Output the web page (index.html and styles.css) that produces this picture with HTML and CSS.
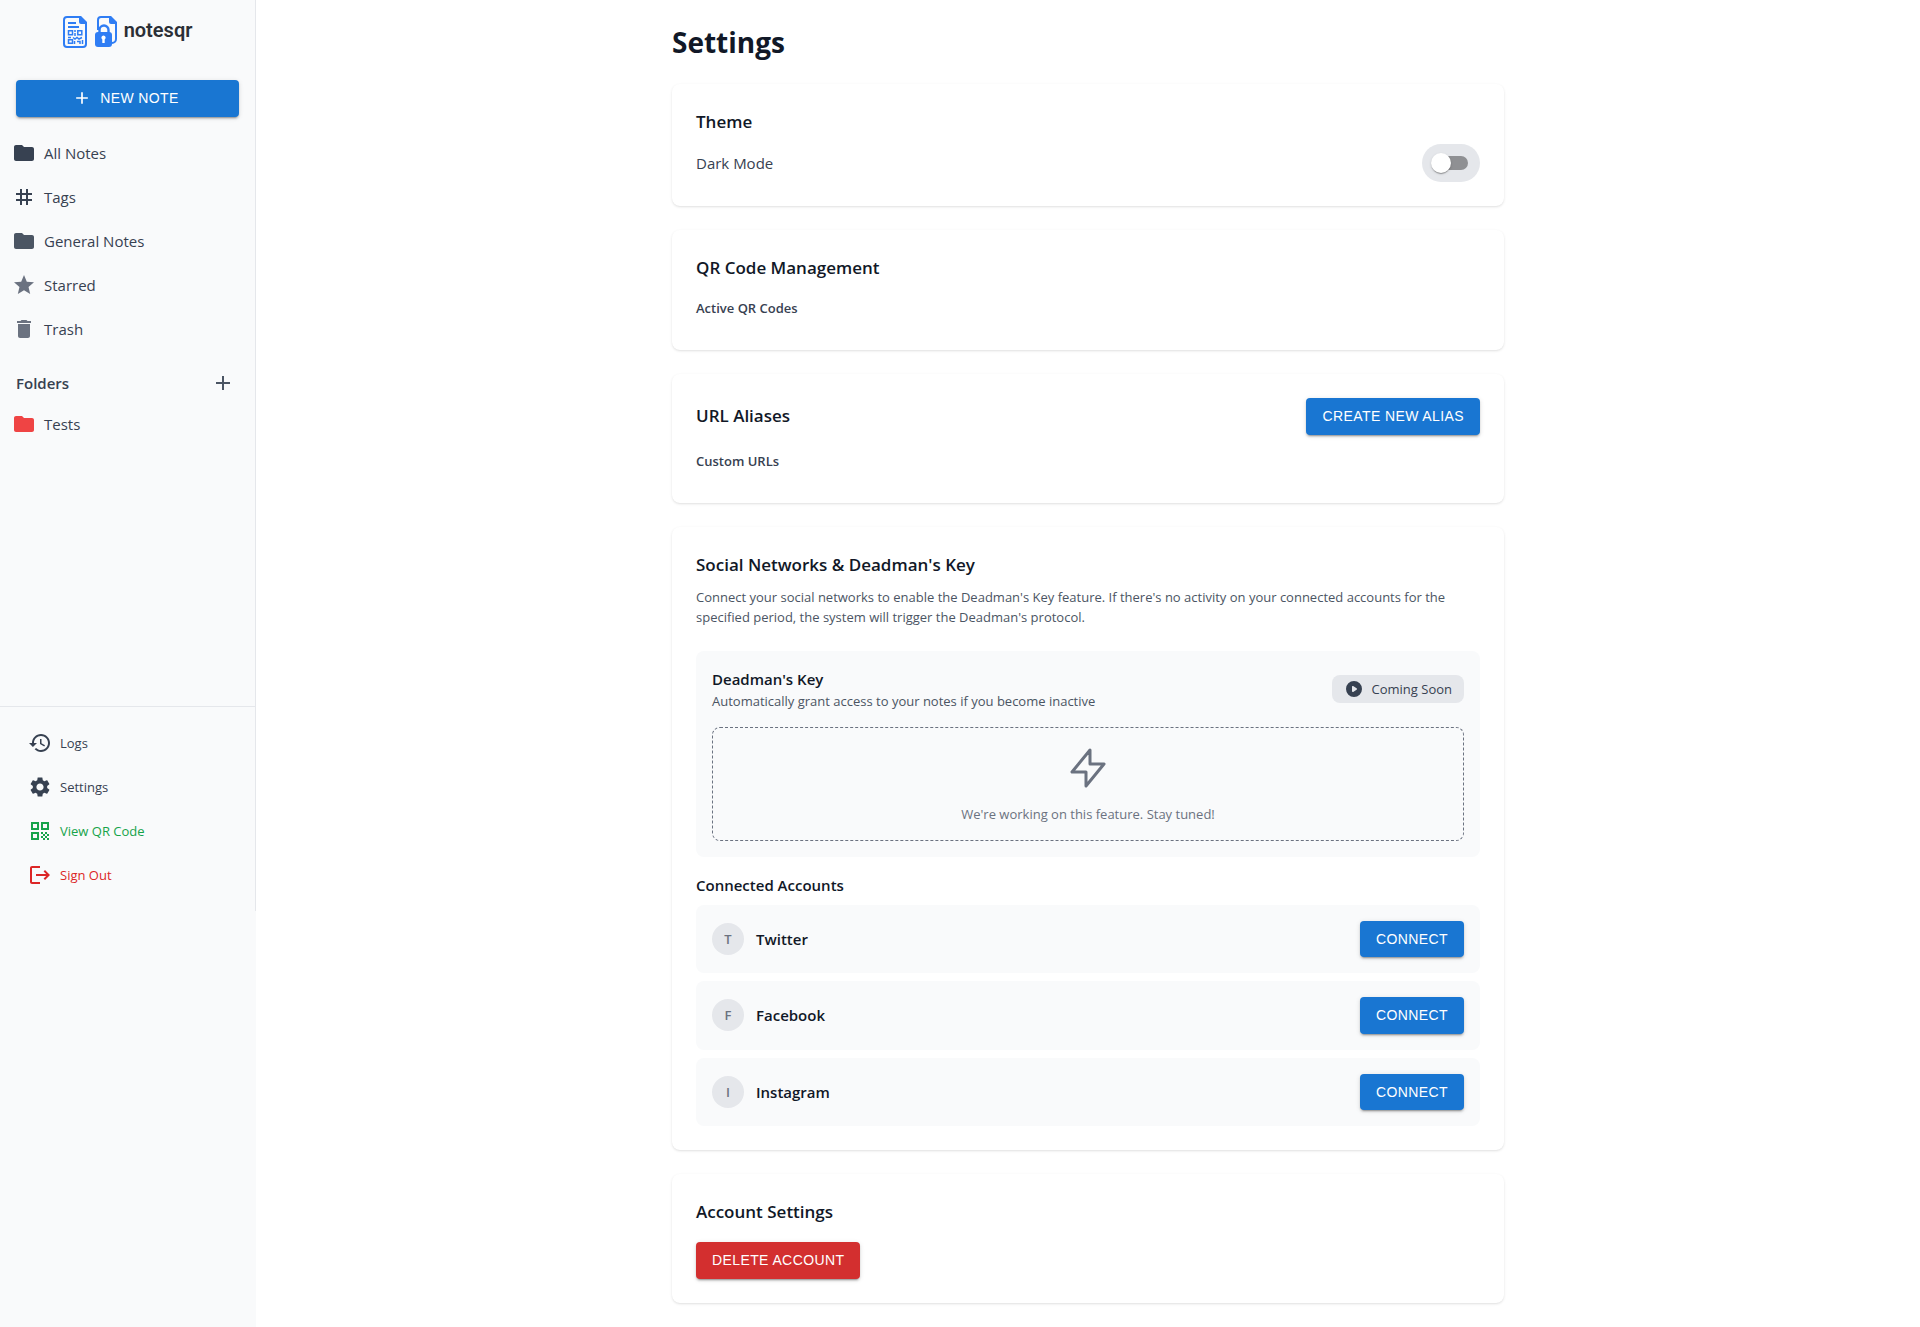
FILE: index.html
```html
<!DOCTYPE html>
<html lang="en">
<head>
<meta charset="utf-8">
<meta name="viewport" content="width=device-width, initial-scale=1">
<title>Settings - notesqr</title>
<link rel="stylesheet" href="styles.css">
</head>
<body>
<div class="app">
  <aside class="sidebar">
    <div class="sidebar-panel">
      <a class="logo" href="#">
        <svg class="logo-mark" viewBox="0 0 54 32" aria-hidden="true">
          <g fill="none" stroke="#2f7df4" stroke-width="2">
            <path d="M4 1h13l6 6v21a3 3 0 0 1-3 3H4a3 3 0 0 1-3-3V4a3 3 0 0 1 3-3z"/>
            <path d="M5 7h8M5 11h11"/>
            <path stroke-width="1.500" d="M5.500 14.800h4v4h-4zM14.800 14.800h4v4h-4zM5.500 23.800h4v3.500h-4z"/>
            <path stroke-width="1.500" d="M11 15h2M12 17v3M5 21.500h3M10 21.500l2 1.500 2-1.500 2 1.500 3-1.500M11.500 25v3M14 25.500h3v2.500M19.500 24v4"/>
            <path d="M35 14V4a3 3 0 0 1 3-3h9l6 6v16a4 4 0 0 1-4 4"/>
            <path stroke-width="2.400" d="M36.500 17v-3a4.500 4.500 0 0 1 9 0v3"/>
          </g>
          <path fill="#2f7df4" d="M16 0h2l6 6v2h-6a2 2 0 0 1-2-2zM46 0h2l6 6v2h-6a2 2 0 0 1-2-2z"/>
          <rect x="32" y="16" width="17" height="15" rx="3" fill="#2f7df4"/>
          <path fill="#fff" d="M40.500 19.500a2.200 2.200 0 0 1 1.200 4v3.500h-2.400v-3.500a2.200 2.200 0 0 1 1.200-4z"/>
        </svg>
        <span class="logo-text">notesqr</span>
      </a>

      <button class="btn btn-block" type="button">
        <svg class="btn-icon" viewBox="0 0 24 24" aria-hidden="true"><path d="M19 13h-6v6h-2v-6H5v-2h6V5h2v6h6v2z"/></svg>
        NEW NOTE
      </button>

      <nav class="nav" aria-label="Notes">
        <a class="nav-item" href="#"><svg class="icon" viewBox="0 0 24 24" aria-hidden="true"><path d="M10 4H4c-1.100 0-1.990.9-1.990 2L2 18c0 1.100.9 2 2 2h16c1.100 0 2-.9 2-2V8c0-1.100-.9-2-2-2h-8l-2-2z"/></svg>All Notes</a>
        <a class="nav-item" href="#"><svg class="icon" viewBox="0 0 24 24" aria-hidden="true"><path d="M20 10V8h-4V4h-2v4h-4V4H8v4H4v2h4v4H4v2h4v4h2v-4h4v4h2v-4h4v-2h-4v-4h4zm-6 4h-4v-4h4v4z"/></svg>Tags</a>
        <a class="nav-item" href="#"><svg class="icon icon-slate" viewBox="0 0 24 24" aria-hidden="true"><path d="M10 4H4c-1.100 0-1.990.9-1.990 2L2 18c0 1.100.9 2 2 2h16c1.100 0 2-.9 2-2V8c0-1.100-.9-2-2-2h-8l-2-2z"/></svg>General Notes</a>
        <a class="nav-item" href="#"><svg class="icon icon-gray" viewBox="0 0 24 24" aria-hidden="true"><path d="M12 17.270 18.180 21l-1.640-7.030L22 9.240l-7.190-.61L12 2 9.190 8.630 2 9.240l5.460 4.730L5.820 21z"/></svg>Starred</a>
        <a class="nav-item" href="#"><svg class="icon icon-gray" viewBox="0 0 24 24" aria-hidden="true"><path d="M6 19c0 1.100.9 2 2 2h8c1.100 0 2-.9 2-2V7H6v12zM19 4h-3.500l-1-1h-5l-1 1H5v2h14V4z"/></svg>Trash</a>
      </nav>

      <div class="folders-head">
        <h2 class="folders-title">Folders</h2>
        <button class="icon-btn" type="button" aria-label="Add folder"><svg class="icon icon-slate" viewBox="0 0 24 24" aria-hidden="true"><path d="M19 13h-6v6h-2v-6H5v-2h6V5h2v6h6v2z"/></svg></button>
      </div>
      <nav class="nav nav-folders" aria-label="Folders">
        <a class="nav-item" href="#"><svg class="icon icon-red" viewBox="0 0 24 24" aria-hidden="true"><path d="M10 4H4c-1.100 0-1.990.9-1.990 2L2 18c0 1.100.9 2 2 2h16c1.100 0 2-.9 2-2V8c0-1.100-.9-2-2-2h-8l-2-2z"/></svg>Tests</a>
      </nav>

      <nav class="nav nav-footer" aria-label="Account">
        <a class="nav-item nav-small" href="#"><svg class="icon" viewBox="0 0 24 24" aria-hidden="true"><path d="M13 3c-4.970 0-9 4.030-9 9H1l3.890 3.890.07.14L9 12H6c0-3.870 3.130-7 7-7s7 3.130 7 7-3.130 7-7 7c-1.930 0-3.680-.79-4.940-2.060l-1.420 1.420C8.270 19.990 10.510 21 13 21c4.970 0 9-4.030 9-9s-4.030-9-9-9zm-1 5v5l4.280 2.540.72-1.210-3.500-2.080V8H12z"/></svg>Logs</a>
        <a class="nav-item nav-small" href="#" aria-current="page"><svg class="icon" viewBox="0 0 24 24" aria-hidden="true"><path d="M19.140 12.940c.04-.3.060-.61.060-.94 0-.32-.02-.64-.07-.94l2.030-1.580c.18-.14.230-.41.120-.61l-1.920-3.320c-.12-.22-.37-.29-.59-.22l-2.390.96c-.5-.38-1.030-.7-1.620-.94l-.36-2.540c-.04-.24-.24-.41-.48-.41h-3.840c-.24 0-.43.170-.47.410l-.36 2.540c-.59.240-1.130.57-1.620.94l-2.390-.96c-.22-.08-.47 0-.59.220L2.740 8.870c-.12.210-.08.470.12.610l2.030 1.580c-.05.3-.09.630-.09.940s.02.640.07.940l-2.030 1.580c-.18.140-.23.410-.12.610l1.920 3.320c.12.220.37.290.59.220l2.390-.96c.5.380 1.030.7 1.620.94l.36 2.540c.05.240.24.410.48.410h3.840c.24 0 .44-.17.470-.41l.36-2.540c.59-.24 1.130-.56 1.620-.94l2.390.96c.22.080.47 0 .59-.22l1.920-3.320c.12-.22.070-.47-.12-.61l-2.010-1.580zM12 15.600c-1.980 0-3.600-1.620-3.600-3.600s1.620-3.600 3.600-3.600 3.600 1.620 3.600 3.600-1.620 3.600-3.600 3.600z"/></svg>Settings</a>
        <a class="nav-item nav-small nav-green" href="#"><svg class="icon" viewBox="0 0 24 24" aria-hidden="true"><path d="M3 11h8V3H3v8zm2-6h4v4H5V5zM3 21h8v-8H3v8zm2-6h4v4H5v-4zM13 3v8h8V3h-8zm6 6h-4V5h4v4zM19 19h2v2h-2zM13 13h2v2h-2zM15 15h2v2h-2zM13 17h2v2h-2zM15 19h2v2h-2zM17 17h2v2h-2zM17 13h2v2h-2zM19 15h2v2h-2z"/></svg>View QR Code</a>
        <a class="nav-item nav-small nav-red" href="#"><svg class="icon" viewBox="0 0 24 24" aria-hidden="true"><path d="m17 7-1.410 1.410L18.170 11H8v2h10.170l-2.580 2.580L17 17l5-5zM4 5h8V3H4c-1.100 0-2 .9-2 2v14c0 1.100.9 2 2 2h8v-2H4V5z"/></svg>Sign Out</a>
      </nav>
    </div>
  </aside>

  <main class="main">
    <div class="content">
      <h1 class="page-title">Settings</h1>

      <section class="card">
        <h2 class="card-title">Theme</h2>
        <div class="row row-theme">
          <label class="body-text" for="dark-mode">Dark Mode</label>
          <input class="switch" id="dark-mode" type="checkbox" role="switch">
        </div>
      </section>

      <section class="card">
        <h2 class="card-title">QR Code Management</h2>
        <h3 class="card-subtitle">Active QR Codes</h3>
      </section>

      <section class="card">
        <div class="row">
          <h2 class="card-title">URL Aliases</h2>
          <button class="btn" type="button">CREATE NEW ALIAS</button>
        </div>
        <h3 class="card-subtitle">Custom URLs</h3>
      </section>

      <section class="card">
        <h2 class="card-title">Social Networks &amp; Deadman's Key</h2>
        <p class="small-text card-desc">Connect your social networks to enable the Deadman's Key feature. If there's no activity on your connected accounts for the specified period, the system will trigger the Deadman's protocol.</p>

        <div class="panel">
          <div class="row">
            <div>
              <h3 class="item-title">Deadman's Key</h3>
              <p class="small-text">Automatically grant access to your notes if you become inactive</p>
            </div>
            <span class="chip">
              <svg class="chip-icon" viewBox="0 0 20 20" aria-hidden="true"><path fill-rule="evenodd" d="M10 18a8 8 0 1 0 0-16 8 8 0 0 0 0 16zM9.555 7.168A1 1 0 0 0 8 8v4a1 1 0 0 0 1.555.832l3-2a1 1 0 0 0 0-1.664l-3-2z"/></svg>
              Coming Soon
            </span>
          </div>
          <div class="placeholder">
            <svg class="bolt" viewBox="0 0 24 24" aria-hidden="true"><path d="M13 10V3L4 14h7v7l9-11h-7z"/></svg>
            <p class="small-text muted">We're working on this feature. Stay tuned!</p>
          </div>
        </div>

        <h3 class="item-title accounts-title">Connected Accounts</h3>
        <ul class="accounts">
          <li class="account"><span class="avatar" aria-hidden="true">T</span><span class="item-title account-name">Twitter</span><button class="btn" type="button">CONNECT</button></li>
          <li class="account"><span class="avatar" aria-hidden="true">F</span><span class="item-title account-name">Facebook</span><button class="btn" type="button">CONNECT</button></li>
          <li class="account"><span class="avatar" aria-hidden="true">I</span><span class="item-title account-name">Instagram</span><button class="btn" type="button">CONNECT</button></li>
        </ul>
      </section>

      <section class="card">
        <h2 class="card-title">Account Settings</h2>
        <button class="btn btn-danger" type="button">DELETE ACCOUNT</button>
      </section>
    </div>
  </main>
</div>
</body>
</html>
```
FILE: styles.css
```css
*, *::before, *::after { box-sizing: border-box; }

body, h1, h2, h3, p, ul { margin: 0; padding: 0; }

body {
  background: #fff;
  color: #111827;
  font-family: "Segoe UI", "Open Sans", sans-serif;
  font-size: 15px;
  line-height: 24px;
}

a { color: inherit; text-decoration: none; }
svg { display: block; flex: none; fill: currentColor; }

.app { display: flex; min-height: 100vh; }

/* Sidebar */
.sidebar { flex: none; width: 256px; background: #f9fafb; }

.sidebar-panel {
  display: flex;
  flex-direction: column;
  border-right: 1px solid #e5e7eb;
  padding-top: 16px;
  color: #374151;
}

.logo {
  display: flex;
  align-items: center;
  justify-content: center;
  gap: 7px;
  margin-bottom: 32px;
}
.logo-mark { width: 54px; height: 32px; }
.logo-text {
  color: #2b2f36;
  font-family: Roboto, sans-serif;
  font-size: 20px;
  font-weight: 600;
  line-height: 28px;
  padding-bottom: 4px;
}

.nav { display: flex; flex-direction: column; gap: 4px; padding-top: 16px; }
.nav-item {
  display: flex;
  align-items: center;
  gap: 8px;
  height: 40px;
  padding: 0 12px;
}
.nav-folders { min-height: 306px; padding-top: 4px; }
.nav-footer {
  border-top: 1px solid #e5e7eb;
  padding: 16px;
}
.nav-small { font-size: 13px; }
.nav-green { color: #16a34a; }
.nav-red { color: #dc2626; }

.icon { width: 24px; height: 24px; }
.icon-slate { color: #4b5563; }
.icon-gray { color: #6b7280; }
.icon-red { color: #ef4444; }

.folders-head {
  display: flex;
  align-items: center;
  justify-content: space-between;
  padding: 17px 15px 0 16px;
}
.folders-title { font-size: 15px; font-weight: 600; }
.icon-btn {
  border: 0;
  border-radius: 50%;
  padding: 5px;
  background: none;
  cursor: pointer;
}

/* Buttons */
.btn {
  display: inline-flex;
  align-items: center;
  justify-content: center;
  border: 0;
  border-radius: 4px;
  padding: 6px 16px;
  background: #1976d2;
  color: #fff;
  box-shadow: 0 3px 1px -2px rgba(0, 0, 0, .2), 0 2px 2px rgba(0, 0, 0, .14), 0 1px 5px rgba(0, 0, 0, .12);
  font-family: "Liberation Sans", Arial, sans-serif;
  font-size: 14px;
  font-weight: 500;
  line-height: 1.75;
  letter-spacing: .02857em;
  cursor: pointer;
}
.btn-block { margin: 0 16px; }
.btn-danger { margin-top: 16px; background: #d32f2f; }
.btn-icon { width: 20px; height: 20px; margin: 0 8px 0 -4px; }

/* Main column */
.main { flex: 1; min-width: 0; padding: 24px 32px; }
.content {
  display: flex;
  flex-direction: column;
  gap: 24px;
  max-width: 832px;
  margin: 0 auto;
}
.page-title { font-size: 28px; font-weight: 700; line-height: 36px; }

.card {
  border-radius: 8px;
  padding: 24px;
  background: #fff;
  box-shadow: 0 1px 3px rgba(0, 0, 0, .1), 0 1px 2px -1px rgba(0, 0, 0, .1);
}
.card-title { font-size: 17px; font-weight: 600; line-height: 28px; }
.card-subtitle {
  margin: 16px 0 8px;
  color: #374151;
  font-size: 13px;
  font-weight: 600;
  line-height: 20px;
}
.card-desc { margin: 8px 0 24px; }

.row { display: flex; align-items: center; justify-content: space-between; gap: 16px; }
.row-theme { margin-top: 8px; }

.body-text { color: #374151; }
.small-text { color: #4b5563; font-size: 13px; line-height: 20px; }
.muted { color: #6b7280; }
.item-title { font-size: 15px; font-weight: 600; line-height: 24px; }

.switch {
  appearance: none;
  position: relative;
  width: 58px;
  height: 38px;
  margin: 0;
  border-radius: 19px;
  background: #e5e7eb;
  cursor: pointer;
}
.switch::before, .switch::after { content: ""; position: absolute; }
.switch::before {
  inset: 12px;
  border-radius: 7px;
  background: #8f9093;
}
.switch::after {
  top: 9px;
  left: 9px;
  width: 20px;
  height: 20px;
  border-radius: 50%;
  background: #fff;
  box-shadow: 0 2px 1px -1px rgba(0, 0, 0, .2), 0 1px 1px rgba(0, 0, 0, .14), 0 1px 3px rgba(0, 0, 0, .12);
}
.switch:checked::before { background: #1976d2; }
.switch:checked::after { left: 29px; }

.panel { border-radius: 8px; padding: 16px; background: #f9fafb; }

.chip {
  display: flex;
  align-items: center;
  gap: 8px;
  border-radius: 8px;
  padding: 4px 12px;
  background: #e5e7eb;
  color: #374151;
  font-size: 13px;
  line-height: 20px;
}
.chip-icon { width: 20px; height: 20px; }

.placeholder {
  display: flex;
  flex-direction: column;
  align-items: center;
  gap: 12px;
  margin-top: 16px;
  border: 1px dashed #6b7280;
  border-radius: 8px;
  padding: 16px;
}
.bolt {
  width: 48px;
  height: 48px;
  fill: none;
  stroke: #6b7280;
  stroke-width: 1.5;
  stroke-linecap: round;
  stroke-linejoin: round;
}

.accounts-title { margin: 16px 0 8px; }
.accounts { display: flex; flex-direction: column; gap: 8px; list-style: none; }
.account {
  display: flex;
  align-items: center;
  gap: 12px;
  border-radius: 8px;
  padding: 16px;
  background: #f9fafb;
}
.account-name { flex: 1; }
.avatar {
  display: flex;
  align-items: center;
  justify-content: center;
  width: 32px;
  height: 32px;
  border-radius: 50%;
  background: #e5e7eb;
  color: #6b7280;
  font-size: 13px;
  font-weight: 600;
}
```
